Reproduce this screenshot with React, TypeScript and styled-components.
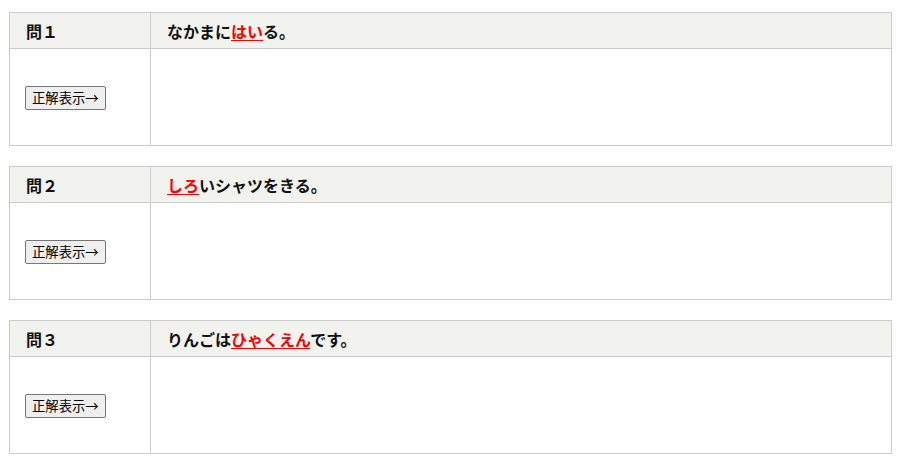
import React from "react";
import styled, { createGlobalStyle } from "styled-components";

const GlobalStyle = createGlobalStyle`
  html, body {
    margin: 0;
    padding: 0;
    background: #ffffff;
  }
  body {
    font-family: "Noto Sans CJK JP", "Noto Sans", sans-serif;
    color: #111;
  }
`;

const Page = styled.div`
  display: flex;
  flex-direction: column;
  gap: 20px;
  padding: 12px 16px 0 9px;
`;

const QuizTable = styled.table`
  width: 883px;
  border-collapse: collapse;
  table-layout: fixed;
`;

const HeadCell = styled.th<{ $first?: boolean }>`
  width: ${p => (p.$first ? "108px" : "auto")};
  height: 35px;
  padding: 0 16px;
  background: #f2f2ee;
  border: 1px solid #cccccc;
  text-align: left;
  vertical-align: middle;
  font-size: 16px;
  font-weight: 700;
  line-height: 20px;
  color: #111;
`;

const BodyCell = styled.td`
  height: 96px;
  padding: 0 15px;
  border: 1px solid #cccccc;
  vertical-align: middle;
`;

const Mark = styled.span`
  color: #ff0000;
  text-decoration: underline;
  text-underline-offset: 2px;
`;

const AnswerButton = styled.button`
  font-family: "Noto Sans CJK JP", sans-serif;
  font-size: 13.333px;
  line-height: 18px;
  height: 24px;
  padding: 1px 6px;
  color: #000;
  background: #efefef;
  border: 1px solid #767676;
  border-radius: 2px;
  cursor: pointer;
`;

interface Question {
  no: string;
  parts: Array<{ text: string; mark?: boolean }>;
}

const questions: Question[] = [
  { no: "問１", parts: [{ text: "なかまに" }, { text: "はい", mark: true }, { text: "る。" }] },
  { no: "問２", parts: [{ text: "しろ", mark: true }, { text: "いシャツをきる。" }] },
  { no: "問３", parts: [{ text: "りんごは" }, { text: "ひゃくえん", mark: true }, { text: "です。" }] },
];

const App: React.FC = () => {
  return (
    <>
      <GlobalStyle />
      <Page>
        {questions.map(q => (
          <QuizTable key={q.no}>
            <thead>
              <tr>
                <HeadCell $first>{q.no}</HeadCell>
                <HeadCell>
                  {q.parts.map((p, i) => (p.mark ? <Mark key={i}>{p.text}</Mark> : <span key={i}>{p.text}</span>))}
                </HeadCell>
              </tr>
            </thead>
            <tbody>
              <tr>
                <BodyCell>
                  <AnswerButton type="button">正解表示→</AnswerButton>
                </BodyCell>
                <BodyCell />
              </tr>
            </tbody>
          </QuizTable>
        ))}
      </Page>
    </>
  );
};

export default App;
